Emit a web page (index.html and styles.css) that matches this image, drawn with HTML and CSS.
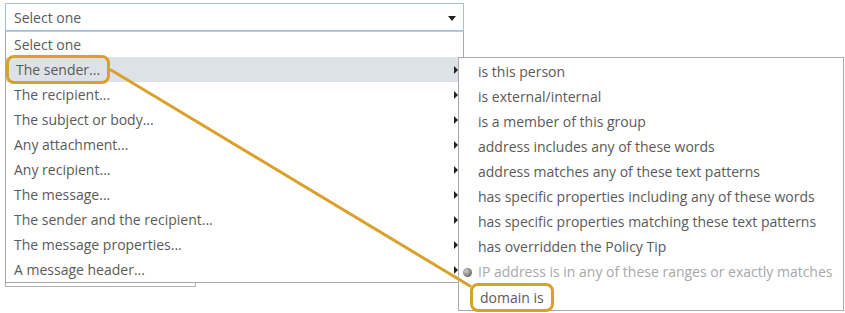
FILE: index.html
```html
<!DOCTYPE html>
<html lang="en">
<head>
  <meta charset="UTF-8" />
  <title>Conditions</title>
  <link rel="stylesheet" href="styles.css">
</head>
<body>
  <div class="page">
    <div class="select">
      <span>Select one</span>
      <span class="caret"></span>
    </div>

    <div class="list">
      <div class="row">Select one</div>
      <div class="row sub active">
        <span class="mark">The sender...</span>
        <div class="submenu">
          <div class="item">is this person</div>
          <div class="item">is external/internal</div>
          <div class="item">is a member of this group</div>
          <div class="item">address includes any of these words</div>
          <div class="item">address matches any of these text patterns</div>
          <div class="item">has specific properties including any of these words</div>
          <div class="item">has specific properties matching these text patterns</div>
          <div class="item">has overridden the Policy Tip</div>
          <div class="item disabled"><span class="dot"></span>IP address is in any of these ranges or exactly matches</div>
          <div class="item"><span class="mark">domain is</span></div>
        </div>
      </div>
      <div class="row sub">The recipient...</div>
      <div class="row sub">The subject or body...</div>
      <div class="row sub">Any attachment...</div>
      <div class="row sub">Any recipient...</div>
      <div class="row sub">The message...</div>
      <div class="row sub">The sender and the recipient...</div>
      <div class="row sub">The message properties...</div>
      <div class="row sub">A message header...</div>
    </div>
    <div class="under"></div>

    <svg class="callout" width="845" height="313" viewBox="0 0 845 313">
      <line x1="111" y1="70" x2="470" y2="286" stroke="#d9a12a" stroke-width="3" stroke-linecap="round" />
    </svg>
  </div>
</body>
</html>
```

FILE: styles.css
```css
* {
  box-sizing: border-box;
}

body {
  margin: 0;
  font-family: 'Open Sans', 'Noto Sans', sans-serif;
  font-size: 14px;
  color: #5a5a5a;
  background: #fff;
}

.page {
  position: relative;
  width: 845px;
  height: 313px;
  padding: 3px 0 0 5px;
}

.select {
  width: 459px;
  height: 28px;
  border: 1px solid #9fc2df;
  display: flex;
  align-items: center;
  justify-content: space-between;
  padding: 0 7px 0 8px;
}

.caret {
  width: 0;
  height: 0;
  border-left: 4px solid transparent;
  border-right: 4px solid transparent;
  border-top: 5px solid #222;
  margin-top: 2px;
}

.list {
  width: 459px;
  border: 1px solid #a9a9a9;
  border-top-color: #c8c8c8;
  background: #fff;
}

.row {
  position: relative;
  height: 25px;
  line-height: 25px;
  padding-left: 8px;
}

.row.sub::after {
  content: "";
  position: absolute;
  right: 5px;
  top: 9px;
  border-top: 4px solid transparent;
  border-bottom: 4px solid transparent;
  border-left: 4px solid #222;
}

.row.active {
  background: #dde1e8;
}

.mark {
  display: inline-block;
  line-height: 22px;
  margin-left: -7px;
  padding: 0 6px;
  border: 3px solid #d9a12a;
  border-radius: 8px;
}

.row .mark {
  line-height: 23px;
  margin-top: -2px;
  margin-left: -8px;
  padding: 0 7px 0 7px;
  vertical-align: top;
}

.under {
  width: 191px;
  height: 4px;
  border: 1px solid #b4b4b4;
  border-top: none;
}

.submenu {
  position: absolute;
  left: 452px;
  top: 0;
  width: 386px;
  padding-top: 1px;
  border: 1px solid #a9a9a9;
  background: #fff;
  z-index: 2;
}

.item {
  position: relative;
  height: 25px;
  line-height: 25px;
  padding-left: 19px;
  white-space: nowrap;
}

.item:last-child {
  height: 26px;
}

.item.disabled {
  color: #a8a8a8;
}

.dot {
  position: absolute;
  left: 4px;
  top: 9px;
  width: 9px;
  height: 9px;
  border-radius: 50%;
  background: radial-gradient(circle at 35% 35%, #cfcfcf, #6e6e6e 70%);
}

.item .mark {
  vertical-align: top;
  margin-top: -1px;
}

.callout {
  position: absolute;
  left: 0;
  top: 0;
  pointer-events: none;
  z-index: 3;
}
```
